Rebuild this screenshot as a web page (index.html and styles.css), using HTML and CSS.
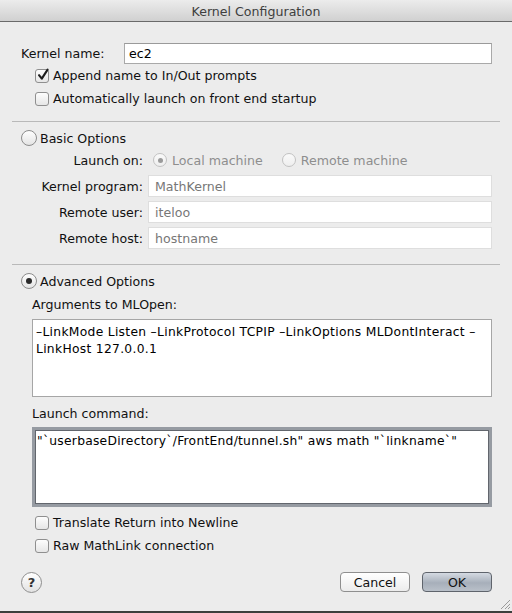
FILE: index.html
```html
<!DOCTYPE html>
<html>
<head>
<meta charset="utf-8">
<link rel="stylesheet" href="styles.css">
</head>
<body>
<div class="window">
  <div class="titlebar">Kernel Configuration</div>
  <div class="content">
    <div class="name-row">
      <span class="name-lbl">Kernel name:</span>
      <div class="field name-field">ec2</div>
    </div>
    <div class="check-row first">
      <span class="cb checked"><svg width="14" height="14" viewBox="0 0 14 14"><path d="M3 7.2 L5.8 10.6 L11.6 1.6" fill="none" stroke="#1e1e1e" stroke-width="2.1" stroke-linecap="round" stroke-linejoin="round"/></svg></span>
      <span>Append name to In/Out prompts</span>
    </div>
    <div class="check-row">
      <span class="cb"></span>
      <span>Automatically launch on front end startup</span>
    </div>

    <div class="sep sep1"></div>

    <div class="radio-row basic">
      <span class="rb"></span>
      <span>Basic Options</span>
    </div>
    <div class="grid">
      <span class="glbl">Launch on:</span>
      <div class="launch">
        <span class="rb small dis on"></span><span class="dis-text local">Local machine</span>
        <span class="rb small dis"></span><span class="dis-text">Remote machine</span>
      </div>
      <span class="glbl">Kernel program:</span>
      <div class="field dfield">MathKernel</div>
      <span class="glbl">Remote user:</span>
      <div class="field dfield">iteloo</div>
      <span class="glbl">Remote host:</span>
      <div class="field dfield">hostname</div>
    </div>

    <div class="sep sep2"></div>

    <div class="radio-row adv">
      <span class="rb on"></span>
      <span>Advanced Options</span>
    </div>
    <div class="sub-lbl args-lbl">Arguments to MLOpen:</div>
    <div class="area args">–LinkMode Listen –LinkProtocol TCPIP –LinkOptions MLDontInteract –<br>LinkHost 127.0.0.1</div>
    <div class="sub-lbl cmd-lbl">Launch command:</div>
    <div class="area cmd">"`userbaseDirectory`/FrontEnd/tunnel.sh" aws math "`linkname`"</div>

    <div class="check-row tr">
      <span class="cb"></span>
      <span>Translate Return into Newline</span>
    </div>
    <div class="check-row">
      <span class="cb"></span>
      <span>Raw MathLink connection</span>
    </div>

    <div class="footer">
      <span class="help">?</span>
      <div class="buttons">
        <span class="btn">Cancel</span>
        <span class="btn ok">OK</span>
      </div>
    </div>
  </div>
  <svg class="grip" width="12" height="12" viewBox="0 0 12 12">
    <path d="M11 2 L2 11 M11 6 L6 11 M11 9 L9 11" stroke="#9a9a9a" stroke-width="1"/>
  </svg>
</div>
</body>
</html>
```

FILE: styles.css
```css
html, body {
  margin: 0;
  padding: 0;
}
body {
  width: 512px;
  height: 613px;
  overflow: hidden;
  font-family: "DejaVu Sans", "Liberation Sans", sans-serif;
  font-size: 12.6px;
  color: #111;
}
.window {
  position: relative;
  width: 512px;
  height: 613px;
  background: #ececec;
  box-sizing: border-box;
  border-bottom: 2px solid #3c3f3c;
}
.titlebar {
  height: 21px;
  border-bottom: 1px solid #6a6a6a;
  background: linear-gradient(#ececec, #d0d0d0);
  text-align: center;
  line-height: 23px;
  font-size: 12.6px;
  color: #3e3e3e;
}
.content {
  padding: 0 20px 0 21px;
}
.name-row {
  display: flex;
  align-items: center;
  margin-top: 21px;
  height: 21px;
}
.name-lbl {
  width: 103px;
}
.field {
  box-sizing: border-box;
  background: #fff;
  border: 1px solid #a9a9a9;
  border-top-color: #9a9a9a;
  padding-left: 5px;
  display: flex;
  align-items: center;
}
.name-field {
  flex: 1;
  height: 21px;
  padding-left: 4px;
  color: #000;
}
.check-row {
  display: flex;
  align-items: center;
  height: 23px;
  padding-left: 14px;
  gap: 4px;
}
.cb {
  box-sizing: border-box;
  width: 14px;
  height: 14px;
  border: 1px solid #8f8f8f;
  border-radius: 3px;
  background: linear-gradient(#fdfdfd, #e6e6e6);
  position: relative;
  flex: none;
}
.cb svg {
  position: absolute;
  left: 0;
  top: -2px;
}
.sep {
  height: 1px;
  background: #b9b9b9;
  margin-left: -9px;
  margin-right: -8px;
}
.sep1 { margin-top: 11px; }
.sep2 { margin-top: 15px; }
.radio-row {
  display: flex;
  align-items: center;
  height: 22px;
  gap: 3px;
}
.basic { margin-top: 5px; }
.adv { margin-top: 5px; }
.rb {
  box-sizing: border-box;
  width: 16px;
  height: 16px;
  border-radius: 50%;
  border: 1px solid #8c8c8c;
  background: linear-gradient(#fefefe, #e4e4e4);
  display: flex;
  align-items: center;
  justify-content: center;
  flex: none;
}
.rb.on::after {
  content: "";
  width: 6px;
  height: 6px;
  border-radius: 50%;
  background: #2a2a2a;
}
.rb.small {
  width: 14px;
  height: 14px;
}
.rb.dis {
  border-color: #c2c2c2;
  background: linear-gradient(#fafafa, #eeeeee);
}
.rb.dis.on::after {
  width: 5px;
  height: 5px;
  background: #9a9a9a;
}
.grid {
  display: grid;
  grid-template-columns: 122px 1fr;
  column-gap: 5px;
  row-gap: 4px;
  margin-top: 0px;
}
.glbl {
  text-align: right;
  align-self: center;
}
.launch {
  display: flex;
  align-items: center;
  height: 22px;
  padding-left: 5px;
}
.dis-text {
  color: #8e8e8e;
  margin-left: 5px;
}
.dis-text.local {
  margin-right: 19px;
}
.dfield {
  height: 22px;
  border: 1px solid #dedede;
  color: #777;
  padding-left: 6px;
}
.sub-lbl {
  height: 22px;
  display: flex;
  align-items: center;
  padding-left: 11px;
}
.args-lbl { margin-top: 1px; }
.cmd-lbl { margin-top: 5px; }
.area {
  box-sizing: border-box;
  margin-left: 11px;
  background: #fff;
  color: #000;
  line-height: 17px;
}
.args {
  margin-top: 4px;
  height: 78px;
  border: 1px solid #a6a6a6;
  padding: 4px 3px;
  font-size: 12.3px;
  letter-spacing: 0.3px;
  white-space: nowrap;
}
.cmd {
  margin-top: 3px;
  height: 80px;
  border: 3px solid #969ba2;
  box-shadow: inset 0 0 0 1px #62666d;
  padding: 3px 2px;
  font-size: 12.3px;
  letter-spacing: 0.25px;
  white-space: nowrap;
}
.tr { margin-top: 4px; }
.footer {
  display: flex;
  align-items: center;
  justify-content: space-between;
  margin-top: 14px;
  height: 22px;
}
.help {
  box-sizing: border-box;
  width: 21px;
  height: 21px;
  border-radius: 50%;
  border: 1px solid #8e8e8e;
  background: linear-gradient(#ffffff, #e2e2e2);
  display: flex;
  align-items: center;
  justify-content: center;
  font-weight: bold;
  font-size: 13px;
  color: #333;
}
.buttons {
  display: flex;
  gap: 12px;
}
.btn {
  box-sizing: border-box;
  width: 70px;
  height: 20px;
  border: 1px solid #8f8f8f;
  border-radius: 4px;
  background: linear-gradient(#ffffff, #ececec);
  display: flex;
  align-items: center;
  justify-content: center;
  color: #111;
}
.btn.ok {
  border-color: #5f646c;
  background: linear-gradient(#d4dae2, #a7afba 55%, #b9c0c9);
}
.grip {
  position: absolute;
  right: 1px;
  bottom: 1px;
}
```
